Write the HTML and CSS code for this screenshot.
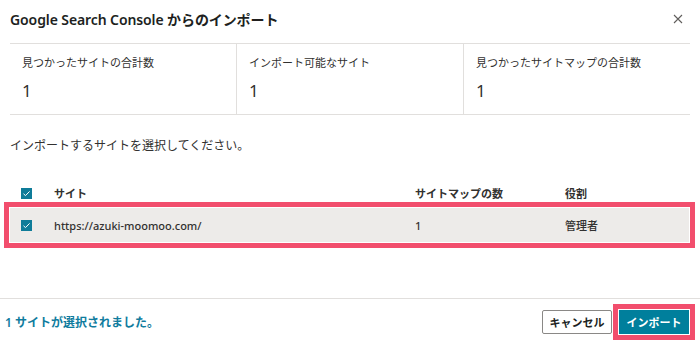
FILE: index.html
```html
<!DOCTYPE html>
<html lang="ja">
<head>
<meta charset="utf-8">
<link rel="stylesheet" href="styles.css">
</head>
<body>
<div class="dialog">
  <div class="main">
    <div class="header">
      <h1 class="title">Google Search Console からのインポート</h1>
      <button class="close" aria-label="閉じる">
        <svg width="10" height="10" viewBox="0 0 10 10"><path d="M1 1L9 9M9 1L1 9" stroke="#605e5c" stroke-width="1.1" fill="none"/></svg>
      </button>
    </div>
    <div class="stats">
      <div class="stat">
        <div class="stat-label">見つかったサイトの合計数</div>
        <div class="stat-value">1</div>
      </div>
      <div class="stat">
        <div class="stat-label">インポート可能なサイト</div>
        <div class="stat-value">1</div>
      </div>
      <div class="stat">
        <div class="stat-label">見つかったサイトマップの合計数</div>
        <div class="stat-value">1</div>
      </div>
    </div>
    <p class="instruction">インポートするサイトを選択してください。</p>
    <div class="table">
      <div class="trow thead">
        <span class="cell cell-check"><span class="checkbox"><svg width="9" height="9" viewBox="0 0 9 9"><path d="M1.5 4.8L3.5 6.6L7.6 2.4" stroke="#fff" stroke-width="1" fill="none"/></svg></span></span>
        <span class="cell cell-site">サイト</span>
        <span class="cell cell-maps">サイトマップの数</span>
        <span class="cell cell-role">役割</span>
      </div>
      <div class="trow tbody selected">
        <span class="cell cell-check"><span class="checkbox"><svg width="9" height="9" viewBox="0 0 9 9"><path d="M1.5 4.8L3.5 6.6L7.6 2.4" stroke="#fff" stroke-width="1" fill="none"/></svg></span></span>
        <span class="cell cell-site">https://azuki-moomoo.com/</span>
        <span class="cell cell-maps">1</span>
        <span class="cell cell-role">管理者</span>
      </div>
    </div>
  </div>
  <div class="footer">
    <span class="status">1 サイトが選択されました。</span>
    <div class="actions">
      <button class="btn btn-secondary">キャンセル</button>
      <button class="btn btn-primary highlight">インポート</button>
    </div>
  </div>
</div>
</body>
</html>
```
FILE: styles.css
```css
* { box-sizing: border-box; }
html, body {
  margin: 0;
  padding: 0;
  background: #fff;
}
body {
  width: 700px;
  height: 344px;
  overflow: hidden;
  font-family: "Noto Sans", "Noto Sans CJK JP", sans-serif;
  color: #323130;
}
.dialog {
  display: flex;
  flex-direction: column;
  height: 344px;
}
.main {
  flex: 1;
  padding: 0 10px;
}
.header {
  height: 43px;
  display: flex;
  align-items: center;
  justify-content: space-between;
  padding-bottom: 6px;
}
.title {
  margin: 0;
  font-size: 14px;
  font-weight: 600;
  color: #201f1e;
  letter-spacing: -0.1px;
}
.close {
  border: 0;
  background: none;
  padding: 0;
  margin-right: 7px;
  display: flex;
}
.stats {
  display: grid;
  grid-template-columns: 226px 227px 1fr;
  border-top: 1px solid #e1dfdd;
  border-bottom: 1px solid #e1dfdd;
  height: 72px;
}
.stat {
  padding: 12px 12px 0;
}
.stat + .stat {
  border-left: 1px solid #e1dfdd;
}
.stat-label {
  font-size: 11px;
  line-height: 14px;
  color: #323130;
}
.stat-value {
  margin-top: 10px;
  font-size: 17px;
  font-weight: 400;
  line-height: 22px;
  color: #323130;
}
.instruction {
  margin: 22px 0 0;
  font-size: 12px;
  line-height: 18px;
  color: #323130;
}
.table {
  margin-top: 25px;
  display: flex;
  flex-direction: column;
  gap: 2px;
}
.trow {
  display: flex;
  align-items: center;
  font-size: 11px;
}
.thead {
  height: 26px;
  font-weight: 600;
}
.tbody {
  height: 34px;
  background: #edebe9;
  margin-right: 1px;
  font-weight: 500;
}
.selected {
  outline: 5px solid #f24e6d;
  outline-offset: 1px;
}
.cell-check {
  width: 44px;
  padding-left: 11px;
  display: flex;
}
.checkbox {
  width: 11px;
  height: 11px;
  background: #0f7c99;
  display: flex;
  align-items: center;
  justify-content: center;
}
.cell-site { width: 361px; }
.cell-maps { width: 150px; }
.cell-role { flex: 1; }
.footer {
  height: 46px;
  border-top: 1px solid #e1dfdd;
  display: flex;
  align-items: center;
  justify-content: space-between;
  padding: 0 11px 0 5px;
}
.status {
  font-size: 12px;
  font-weight: 600;
  color: #107c9e;
}
.actions {
  display: flex;
  gap: 7px;
}
.btn {
  height: 24px;
  width: 70px;
  font-family: inherit;
  font-size: 11px;
  font-weight: 600;
  border-radius: 2px;
  padding: 0;
}
.btn-secondary {
  background: #fff;
  border: 1px solid #8a8886;
  color: #201f1e;
}
.btn-primary {
  background: #007f9c;
  border: 1px solid #007f9c;
  color: #fff;
}
.highlight {
  border-radius: 0;
  outline: 5px solid #f24e6d;
  outline-offset: 1px;
}
```
